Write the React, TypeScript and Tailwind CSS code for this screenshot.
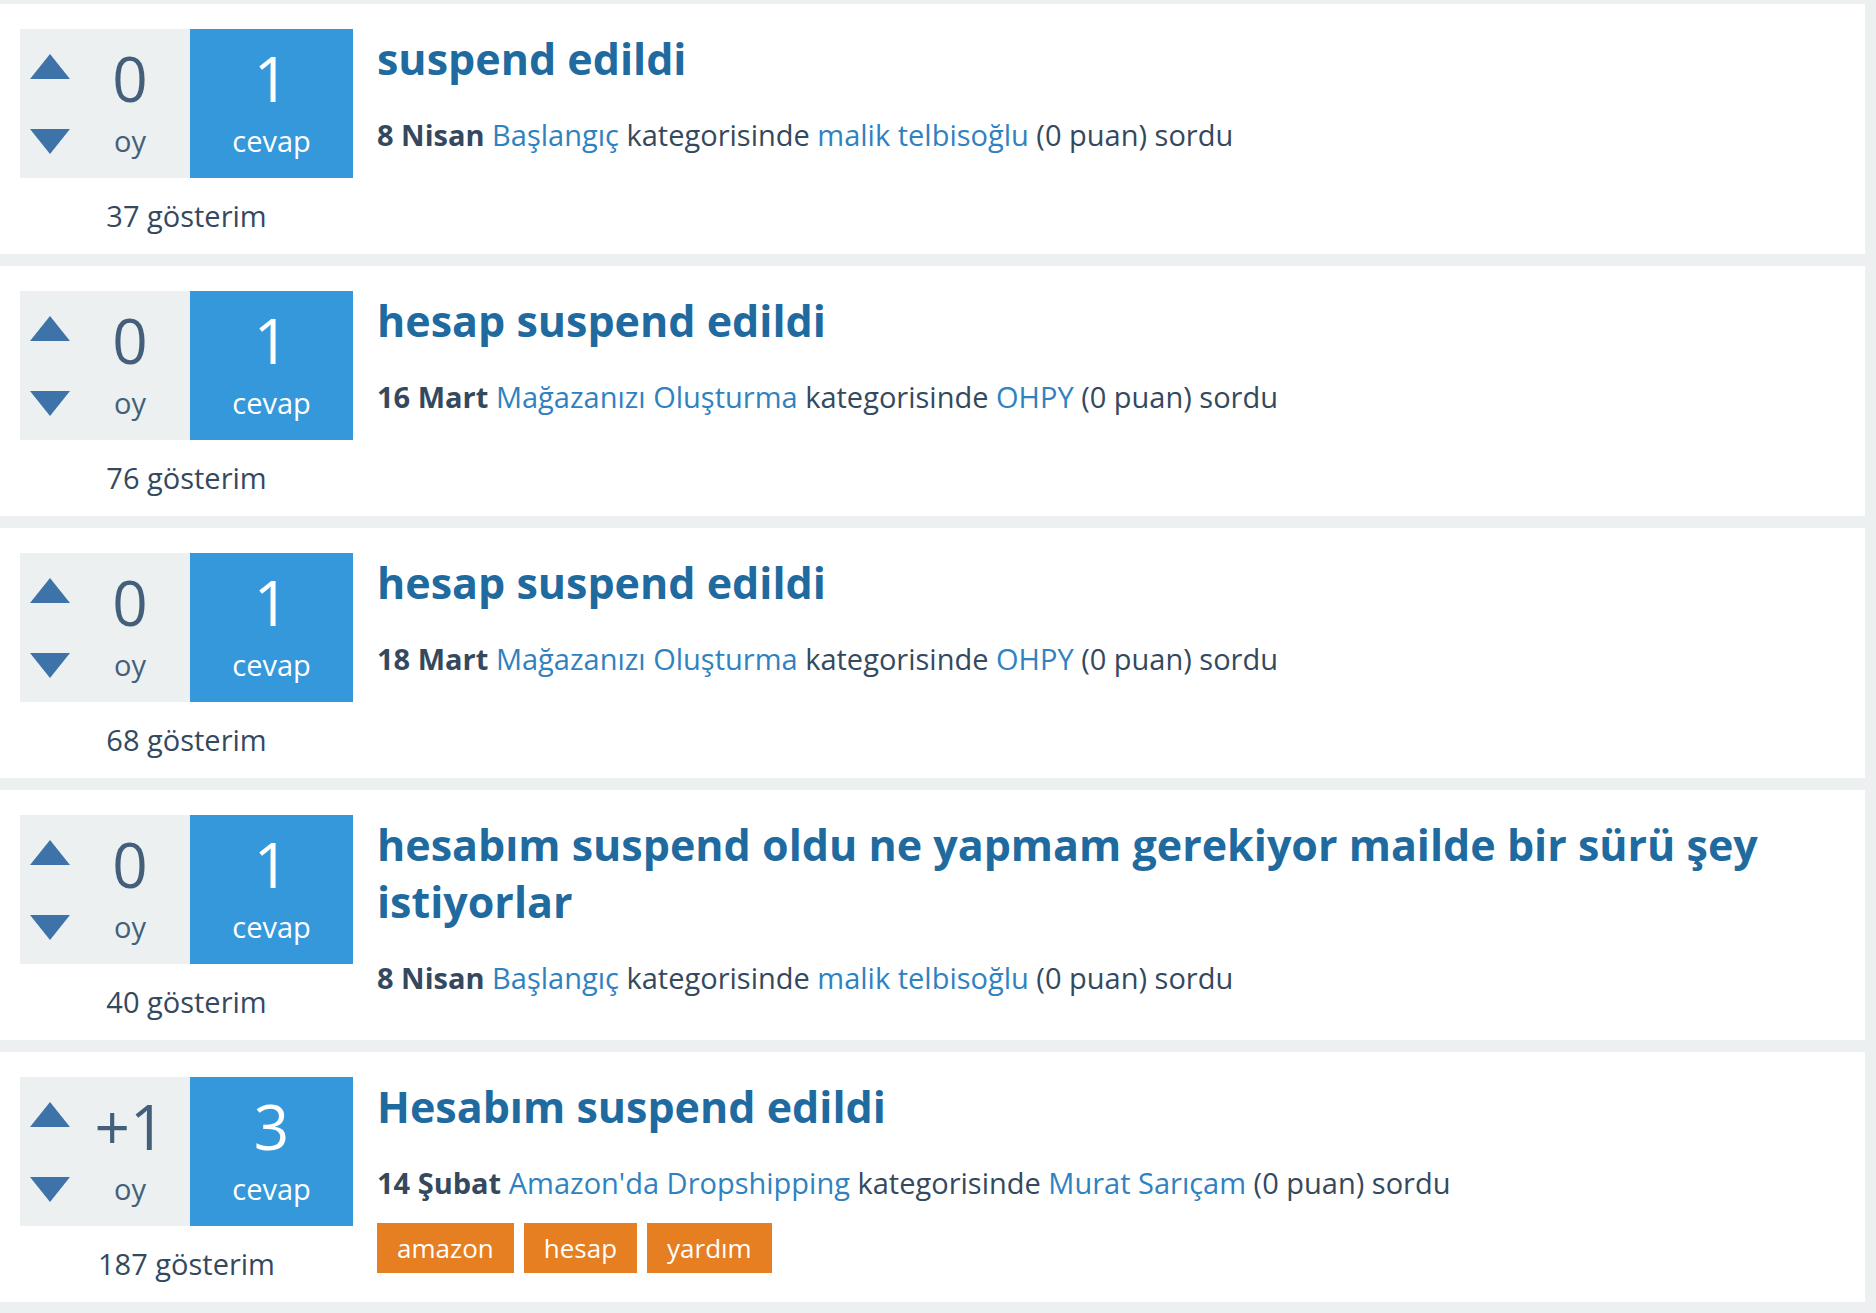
type Question = {
  votes: string;
  answers: number;
  views: number;
  title: string;
  date: string;
  category: string;
  user: string;
  points: number;
  tags?: string[];
};

const questions: Question[] = [
  {
    votes: "0",
    answers: 1,
    views: 37,
    title: "suspend edildi",
    date: "8 Nisan",
    category: "Başlangıç",
    user: "malik telbisoğlu",
    points: 0,
  },
  {
    votes: "0",
    answers: 1,
    views: 76,
    title: "hesap suspend edildi",
    date: "16 Mart",
    category: "Mağazanızı Oluşturma",
    user: "OHPY",
    points: 0,
  },
  {
    votes: "0",
    answers: 1,
    views: 68,
    title: "hesap suspend edildi",
    date: "18 Mart",
    category: "Mağazanızı Oluşturma",
    user: "OHPY",
    points: 0,
  },
  {
    votes: "0",
    answers: 1,
    views: 40,
    title: "hesabım suspend oldu ne yapmam gerekiyor mailde bir sürü şey istiyorlar",
    date: "8 Nisan",
    category: "Başlangıç",
    user: "malik telbisoğlu",
    points: 0,
  },
  {
    votes: "+1",
    answers: 3,
    views: 187,
    title: "Hesabım suspend edildi",
    date: "14 Şubat",
    category: "Amazon'da Dropshipping",
    user: "Murat Sarıçam",
    points: 0,
    tags: ["amazon", "hesap", "yardım"],
  },
];

function VoteArrow({ down }: { down?: boolean }) {
  return (
    <svg width="40" height="25" viewBox="0 0 40 25" className="block">
      {down ? (
        <polygon points="0,0 40,0 20,25" fill="#3d73a8" />
      ) : (
        <polygon points="20,0 40,25 0,25" fill="#3d73a8" />
      )}
    </svg>
  );
}

function QuestionItem({ q }: { q: Question }) {
  return (
    <div className="flex h-[250px] bg-white pl-[20px] pt-[25px]">
      <div className="flex w-[333px] shrink-0 flex-col">
        <div className="flex h-[149px]">
          {/* votes */}
          <div className="flex w-[170px] bg-[#ecf0f1]">
            <div className="ml-[10px] flex w-[40px] flex-col">
              <div className="mt-[25px]">
                <VoteArrow />
              </div>
              <div className="mt-[50px]">
                <VoteArrow down />
              </div>
            </div>
            <div className="flex flex-1 flex-col items-center text-[#445f7a]">
              <span className="mt-[18px] text-[62px] leading-[62px]">{q.votes}</span>
              <span className="mt-[17px] text-[29px] leading-[29px]">oy</span>
            </div>
          </div>
          {/* answers */}
          <div className="flex w-[163px] flex-col items-center bg-[#3498db] text-white">
            <span className="mt-[18px] text-[62px] leading-[62px]">{q.answers}</span>
            <span className="mt-[17px] text-[29px] leading-[29px]">cevap</span>
          </div>
        </div>
        <div className="mt-[23px] text-center text-[29px] leading-[29px] text-[#34495e]">
          {q.views} gösterim
        </div>
      </div>

      <div className="ml-[24px] flex min-w-0 flex-1 flex-col">
        <a className="mt-[1px] text-[43px] font-bold leading-[57px] text-[#1f6a9f]">
          {q.title}
        </a>
        <div className="mt-[28px] text-[29px] leading-[40px] text-[#34495e]">
          <span className="font-bold">{q.date}</span>{" "}
          <a className="text-[#2f82bf]">{q.category}</a> kategorisinde{" "}
          <a className="text-[#2f82bf]">{q.user}</a> ({q.points} puan) sordu
        </div>
        {q.tags && (
          <div className="mt-[20px] flex gap-[10px]">
            {q.tags.map((t) => (
              <span
                key={t}
                className="h-[50px] bg-[#e67e22] px-[20px] text-[26px] leading-[50px] text-white"
              >
                {t}
              </span>
            ))}
          </div>
        )}
      </div>
    </div>
  );
}

export default function App() {
  return (
    <div className="min-h-[1313px] bg-[#ecf0f1] pr-[11px] pt-[4px] font-['Open_Sans',sans-serif]">
      <div className="flex flex-col gap-[12px]">
        {questions.map((q, i) => (
          <QuestionItem key={i} q={q} />
        ))}
      </div>
    </div>
  );
}
